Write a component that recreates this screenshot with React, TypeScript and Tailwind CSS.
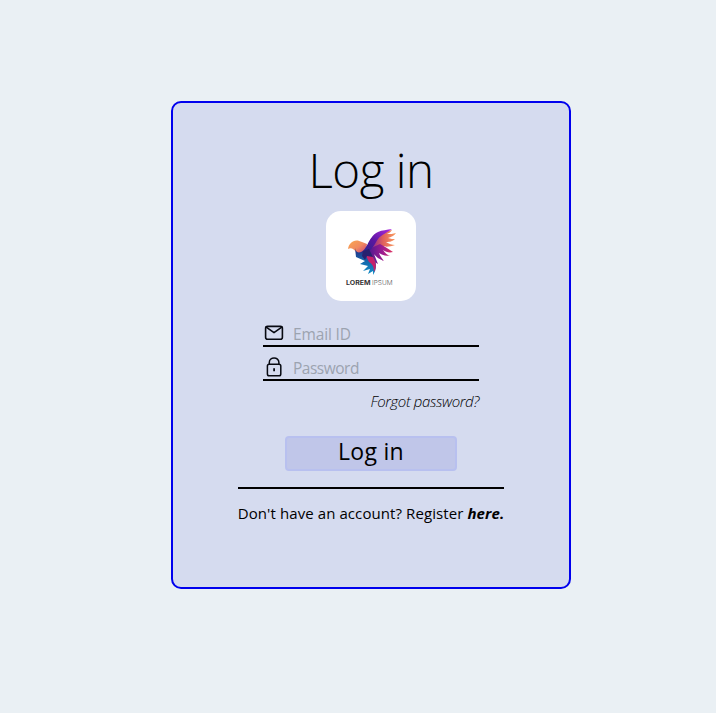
import React from "react";

function BirdLogo() {
  return (
    <svg viewBox="0 0 90 90" className="block h-[90px] w-[90px]" role="img">
      <defs>
        <linearGradient id="body" x1="0" y1="0" x2="1" y2="1">
          <stop offset="0" stopColor="#fba850" />
          <stop offset=".5" stopColor="#f08a60" />
          <stop offset="1" stopColor="#c22c80" />
        </linearGradient>
        <linearGradient id="wing" x1="0" y1="1" x2="1" y2="0">
          <stop offset="0" stopColor="#1c2a88" />
          <stop offset=".5" stopColor="#5a16a0" />
          <stop offset="1" stopColor="#b02be0" />
        </linearGradient>
        <linearGradient id="feather" x1="0" y1="0" x2="1" y2="0">
          <stop offset="0" stopColor="#7d1c9c" />
          <stop offset=".5" stopColor="#e0605c" />
          <stop offset="1" stopColor="#fba060" />
        </linearGradient>
        <linearGradient id="low" x1="0" y1="0" x2="1" y2="0">
          <stop offset="0" stopColor="#4a1890" />
          <stop offset=".6" stopColor="#a01c90" />
          <stop offset="1" stopColor="#e0305c" />
        </linearGradient>
        <linearGradient id="tail" x1="0" y1="0" x2="0" y2="1">
          <stop offset="0" stopColor="#24267e" />
          <stop offset=".5" stopColor="#1468ac" />
          <stop offset="1" stopColor="#1690c8" />
        </linearGradient>
      </defs>
      <path d="M44 36C49 25 58 20 66 19C65 21 63 22 61 23C64 23 67 23 70 22C68 25 65 26 62 27C65 28 67 28 69 28C66 31 62 31 60 31C63 33 66 34 69 34C64 36 59 36 57 35L48 40Z" fill="url(#feather)" />
      <path d="M43 38L54 33C59 36 63 38 67 41C63 42 60 41 57 39C59 42 61 44 64 45C59 45 56 44 53 42C54 45 56 47 58 50C53 48 50 46 48 43L52 53C48 51 44 47 42 43Z" fill="url(#low)" />
      <path d="M22 38C23 31 29 27 36 31L41 33L39 44L31 42C28 38 25 36 22 38Z" fill="url(#body)" />
      <path d="M31 42C42 42 41 26 52 21C56 19 61 19 66 18C61 22 56 23 52 28C47 36 43 45 31 42Z" fill="url(#wing)" />
      <path d="M29 37C30 43 36 43 42 39L49 49C51 54 50 60 47 64L47 60L42 63L44 58L37 60L42 55L34 53L39 50L30 46Z" fill="url(#tail)" />
      <path d="M39 43L43 40C47 46 53 53 48 61C48 55 46 53 43 51Z" fill="#c5216c" />
      <path d="M37 40L43 38L47 46L41 45L39 49L36 45Z" fill="#27206f" />
      <text x="20" y="74.4" fontSize="6" fontWeight="700" textLength="24.5" lengthAdjust="spacingAndGlyphs" fill="#333" fontFamily="Inter, sans-serif">LOREM</text>
      <text x="46" y="74.4" fontSize="6" fontWeight="300" textLength="20.5" lengthAdjust="spacingAndGlyphs" fill="#555" fontFamily="Inter, sans-serif">IPSUM</text>
    </svg>
  );
}

function MailIcon() {
  return (
    <svg viewBox="0 0 22 22" className="mt-[7px] h-[22px] w-[22px] shrink-0" fill="none" stroke="#080a12" strokeWidth="1.6" strokeLinejoin="round" strokeLinecap="round">
      <rect x="2.6" y="4.4" width="16.8" height="12.8" rx="2" />
      <path d="M3.2 5.2L11 10.6L18.8 5.2" />
    </svg>
  );
}

function LockIcon() {
  return (
    <svg viewBox="0 0 22 22" className="mt-[8px] h-[22px] w-[22px] shrink-0" fill="none" stroke="#080a12" strokeWidth="1.5">
      <rect x="4.4" y="8.3" width="13.4" height="11.4" rx="1.8" />
      <path d="M6.3 8V6.5C6.3 0.5 15.9 0.5 15.9 6.5V8" />
      <path d="M11.1 12.3V15.2" strokeWidth="1.8" />
    </svg>
  );
}

type FieldProps = { icon: React.ReactNode; placeholder: string; type: string; className: string };

function Field({ icon, placeholder, type, className }: FieldProps) {
  return (
    <label className="flex h-[34px] w-[216px] items-center border-b-2 border-black">
      {icon}
      <input
        type={type}
        placeholder={placeholder}
        className={"ml-2 mt-[10px] h-[22px] w-[180px] bg-transparent text-[15.5px] leading-[22px] outline-none placeholder:text-[#9ca3af] " + className}
      />
    </label>
  );
}

export default function App() {
  return (
    <main className="flex h-[713px] w-[716px] items-start bg-[#eaf0f4] pl-[171px] pt-[101px] font-['Open_Sans','Noto_Sans',sans-serif] text-black">
      <section className="flex h-[488px] w-[400px] flex-col items-center rounded-[10px] border-2 border-[#0000ee] bg-[#d5dbef]">
        <h1 className="mt-[35px] h-[64px] whitespace-nowrap text-[47.5px] font-light leading-[64px] tracking-[-0.5px]">Log in</h1>
        <div className="mt-[9px] h-[90px] w-[90px] overflow-hidden rounded-[15px] bg-white">
          <BirdLogo />
        </div>
        <form className="mt-[12px] flex flex-col items-center">
          <Field icon={<MailIcon />} placeholder="Email ID" type="email" className="tracking-[-0.15px]" />
          <Field icon={<LockIcon />} placeholder="Password" type="password" className="tracking-[-0.5px]" />
          <a className="mt-[9px] h-[22px] self-end whitespace-nowrap text-[15px] font-light italic leading-[22px] tracking-[-0.4px]">Forgot password?</a>
          <button type="button" className="mt-[24px] h-[35px] w-[172px] rounded-[4px] border-2 border-[#b8c0ef] bg-[#c0c6e9] pb-[4px] text-[23px] leading-[27px] tracking-[0.3px]">Log in</button>
        </form>
        <div className="mt-[16px] flex h-[40px] w-[266px] justify-center whitespace-nowrap border-t-2 border-black pt-[13px] text-[15px] leading-[22px] tracking-[0.09px]">
          <p>Don't have an account? Register <b className="font-bold italic">here.</b></p>
        </div>
      </section>
    </main>
  );
}
